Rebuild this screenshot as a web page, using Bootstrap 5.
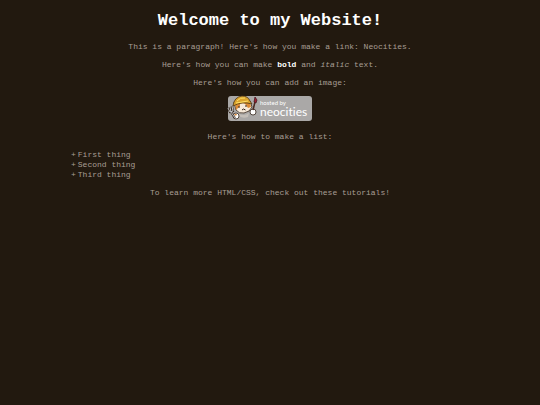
<!DOCTYPE html>
<html lang="en">
<head>
<meta charset="utf-8">
<meta name="viewport" content="width=device-width, initial-scale=1">
<title>Welcome to my Website!</title>
<link href="https://cdn.jsdelivr.net/npm/bootstrap@5.3.0/dist/css/bootstrap.min.css" rel="stylesheet">
<style>
body { background: #22190f; color: #a89e94; font: 8px/10px "Courier New", "Liberation Mono", monospace; }
main { padding: 11px 8px; }
h1 { font-size: 17px; line-height: 20px; margin-bottom: 11px; }
p { margin-bottom: 8px; }
main a { color: inherit; }
strong { color: #fff; }
.hosted { margin-bottom: 11px; }
.plus-list { margin: 0 63px 8px; }
.plus-list li::before { content: "+"; margin-right: 2px; }
.logo-text { font-family: Lato, sans-serif; font-variant-ligatures: none; fill: #fff; }
</style>
</head>
<body>
<main class="text-center">
  <h1 class="text-white fw-bold">Welcome to my Website!</h1>
  <p>This is a paragraph! Here's how you make a link: <a class="text-decoration-none" href="https://neocities.org">Neocities</a>.</p>
  <p>Here's how you can make <strong>bold</strong> and <em>italic</em> text.</p>
  <p>Here's how you can add an image:</p>
  <div class="hosted d-flex justify-content-center">
    <svg width="84" height="25" viewBox="0 0 84 25" overflow="visible" role="img" aria-label="hosted by neocities">
      <rect width="84" height="25" rx="3" fill="#aaa8a7"/>
      <!-- body and paws -->
      <path d="M10 17Q15 21 21 17L20 21Q15 23 11 20Z" fill="#c4beb8"/>
      <circle cx="8" cy="20" r="3" fill="#fff" stroke="#33241a" stroke-width=".8"/>
      <path d="M6 18L9 18L8 20Z" fill="#d88a3c"/>
      <circle cx="25" cy="16" r="3" fill="#fff" stroke="#33241a" stroke-width=".8"/>
      <!-- head -->
      <path d="M6 6L8 14Q11 18 16 17Q22 16 24 11L22 5Z" fill="#f7e9d8" stroke="#33241a" stroke-width=".8"/>
      <path d="M7 7L12 6L12 10L8 14ZM16 7L22 6L23 11L20 12L18 9Z" fill="#dc8a35"/>
      <path d="M11 10v2M18 9v2M14 14l1.5-1 2 1" fill="none" stroke="#33241a"/>
      <!-- helmet -->
      <path d="M5 10Q6 1 14 0Q20 0 22 5L24 8Q14 5 5 10Z" fill="#dca42d" stroke="#4c3514" stroke-width=".8"/>
      <path d="M9 5Q12 1 17 2M8 7L20 5" fill="none" stroke="#ffdf66"/>
      <!-- fork -->
      <path d="M0 12L2 16L5 15L4 10M2 11L3 16L7 22" fill="none" stroke="#33241a" stroke-width="2"/>
      <path d="M0 12L2 16L5 15L4 10M2 11L3 16L7 22" fill="none" stroke="#cfd4d8" stroke-width=".9"/>
      <!-- brush -->
      <path d="M25 14L27 6" stroke="#4a2922" stroke-width="1.5"/>
      <path d="M26 6L27 1L29 4L28 7Z" fill="#9d1e32" stroke="#471b20" stroke-width=".8"/>
      <text class="logo-text" x="32" y="9" font-size="6">hosted by</text>
      <text class="logo-text" x="32" y="20" font-size="12">neocities</text>
    </svg>
  </div>
  <p>Here's how to make a list:</p>
  <ul class="plus-list list-unstyled text-start">
    <li>First thing</li>
    <li>Second thing</li>
    <li>Third thing</li>
  </ul>
  <p>To learn more HTML/CSS, check out <a class="text-decoration-none" href="https://neocities.org/tutorials">these tutorials</a>!</p>
</main>
<script src="https://cdn.jsdelivr.net/npm/bootstrap@5.3.0/dist/js/bootstrap.bundle.min.js"></script>
</body>
</html>
